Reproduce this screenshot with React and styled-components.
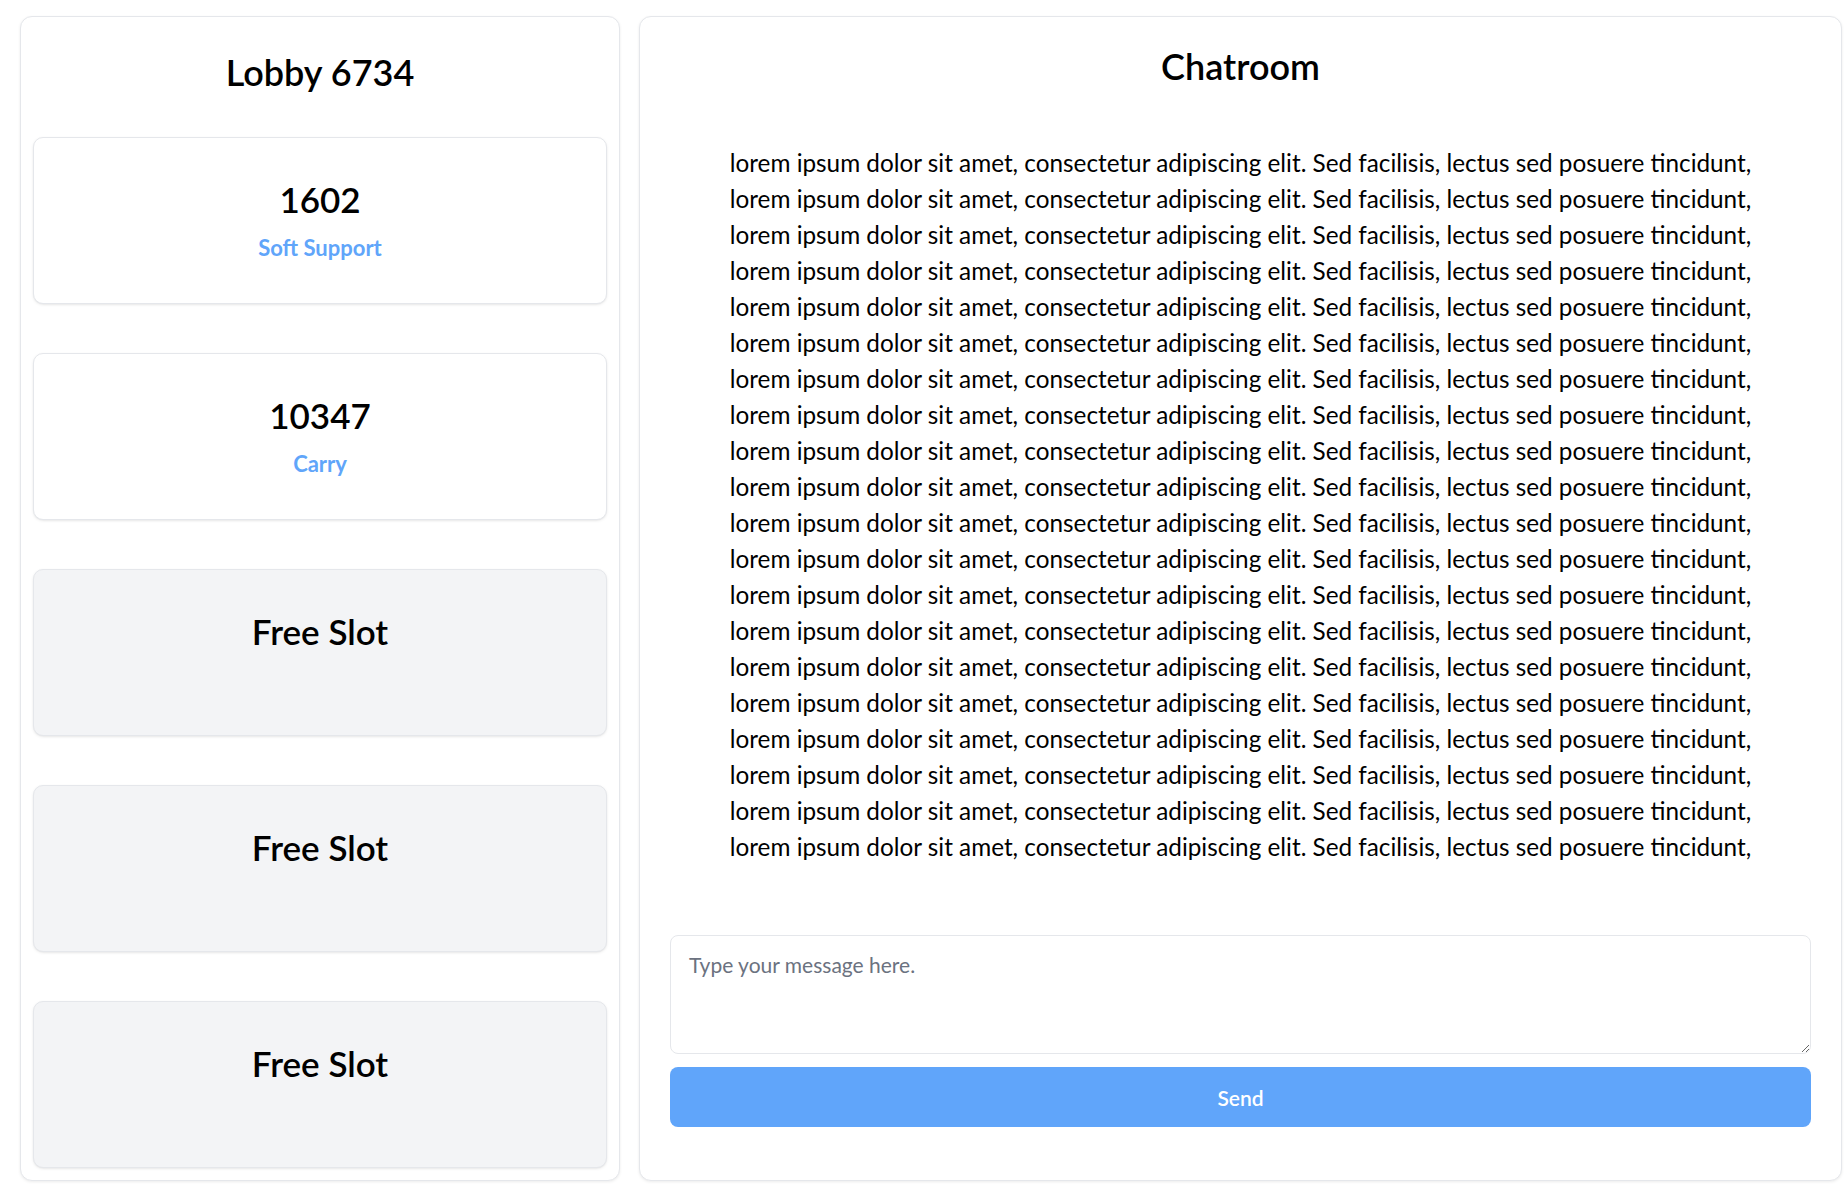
import React from "react";
import styled, { createGlobalStyle } from "styled-components";

const GlobalStyle = createGlobalStyle`
  body {
    margin: 0;
    background: #ffffff;
    font-family: Lato, "Open Sans", sans-serif;
    color: #000000;
  }
`;

export default function App() {
  const players = [
    { mmr: "1602", role: "Soft Support" },
    { mmr: "10347", role: "Carry" },
    null,
    null,
    null,
  ];
  const lines = Array.from({ length: 20 });

  return (
    <>
      <GlobalStyle />
      <Page>
        <LobbyPanel>
          <LobbyTitle>Lobby 6734</LobbyTitle>
          <SlotList>
            {players.map((player, index) =>
              player ? (
                <Slot key={index}>
                  <SlotTitle>{player.mmr}</SlotTitle>
                  <Role>{player.role}</Role>
                </Slot>
              ) : (
                <Slot key={index} free>
                  <SlotTitle>Free Slot</SlotTitle>
                </Slot>
              )
            )}
          </SlotList>
        </LobbyPanel>
        <ChatPanel>
          <ChatTitle>Chatroom</ChatTitle>
          <Messages>
            {lines.map((_, index) => (
              <Message key={index}>
                lorem ipsum dolor sit amet, consectetur adipiscing elit. Sed
                facilisis, lectus sed posuere tincidunt,
              </Message>
            ))}
          </Messages>
          <MessageInput placeholder="Type your message here." />
          <SendButton>Send</SendButton>
        </ChatPanel>
      </Page>
    </>
  );
}

const Page = styled.div`
  display: flex;
  gap: 19px;
  padding: 16px 3px 22px 20px;
`;

const Panel = styled.div`
  box-sizing: border-box;
  height: 1165px;
  background: #ffffff;
  border: 1px solid #e5e7eb;
  border-radius: 12px;
  box-shadow: 0 1px 3px rgba(0, 0, 0, 0.08);
  display: flex;
  flex-direction: column;
`;

const LobbyPanel = styled(Panel)`
  width: 600px;
  flex-shrink: 0;
  padding: 0 12px 12px;
`;

const LobbyTitle = styled.h1`
  margin: 35px 0 45px;
  font-size: 36px;
  line-height: 40px;
  font-weight: 600;
  text-align: center;
`;

const SlotList = styled.div`
  display: flex;
  flex-direction: column;
  gap: 49px;
`;

const Slot = styled.div`
  box-sizing: border-box;
  height: 167px;
  padding-top: 41px;
  border: 1px solid #e5e7eb;
  border-radius: 10px;
  background: ${(p) => (p.free ? "#f3f4f6" : "#ffffff")};
  box-shadow: 0 1px 3px rgba(0, 0, 0, 0.08), 0 1px 2px -1px rgba(0, 0, 0, 0.08);
  display: flex;
  flex-direction: column;
  align-items: center;
`;

const SlotTitle = styled.div`
  font-size: 35px;
  line-height: 40px;
  font-weight: 600;
`;

const Role = styled.div`
  margin-top: 15px;
  font-size: 22px;
  line-height: 28px;
  font-weight: 700;
  color: #60a5fa;
`;

const ChatPanel = styled(Panel)`
  flex: 1;
  padding: 0 30px;
`;

const ChatTitle = styled.h2`
  margin: 29px 0 0;
  font-size: 36px;
  line-height: 40px;
  font-weight: 600;
  text-align: center;
`;

const Messages = styled.div`
  margin-top: 59px;
  display: flex;
  flex-direction: column;
  align-items: center;
`;

const Message = styled.p`
  margin: 0;
  font-size: 24.3px;
  line-height: 36px;
  white-space: nowrap;
`;

const MessageInput = styled.textarea`
  box-sizing: border-box;
  margin-top: 70px;
  width: 100%;
  height: 119px;
  padding: 15px 18px;
  border: 1px solid #e5e7eb;
  border-radius: 8px;
  font-family: Lato, "Open Sans", sans-serif;
  font-size: 21px;
  line-height: 28px;
  color: #111827;
  outline: none;

  &::placeholder {
    color: #6b7280;
  }
`;

const SendButton = styled.button`
  margin-top: 13px;
  height: 60px;
  width: 100%;
  border: none;
  border-radius: 8px;
  background: #60a5fa;
  color: #ffffff;
  font-family: Lato, "Open Sans", sans-serif;
  font-size: 21px;
  font-weight: 600;
  cursor: pointer;
`;
